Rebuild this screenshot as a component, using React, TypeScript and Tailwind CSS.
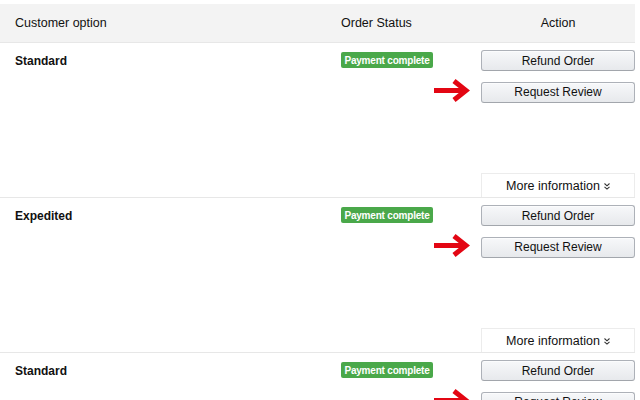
const rows = ['Standard', 'Expedited', 'Standard'];

function RedArrow() {
  return (
    <svg width="36" height="23" viewBox="0 0 36 23" className="block">
      <path d="M0 11.5 H31" stroke="#e30613" strokeWidth="5" fill="none" />
      <path
        d="M20 2 L32 11.5 L20 21"
        stroke="#e30613"
        strokeWidth="5"
        fill="none"
        strokeLinejoin="miter"
      />
    </svg>
  );
}

function ActionButton({ label }: { label: string }) {
  return (
    <button className="h-[21px] w-full rounded-[3px] border border-[#adb1b8] border-b-[#a2a6ac] bg-gradient-to-b from-[#f7f8fa] to-[#e7e9ec] text-[12px] leading-none text-[#111] shadow-[inset_0_1px_0_rgba(255,255,255,0.6)]">
      {label}
    </button>
  );
}

function OrderRow({ option }: { option: string }) {
  return (
    <div className="grid h-[155px] grid-cols-[341px_140px_154px] border-b border-[#e7e7e7]">
      <div className="pl-[15px] pt-[9px] text-[12px] font-bold text-[#111]">
        {option}
      </div>
      <div className="flex flex-col pt-[9px]">
        <span className="flex h-[16px] w-[92px] items-center justify-center whitespace-nowrap rounded-[2px] bg-[#4aa84a] text-[10px] font-bold tracking-[-0.2px] text-white">
          Payment complete
        </span>
        <div className="mt-[11px] flex pl-[93px]">
          <RedArrow />
        </div>
      </div>
      <div className="flex flex-col pt-[7px]">
        <ActionButton label="Refund Order" />
        <div className="mt-[8px]">
          <ActionButton label="Request Review" />
        </div>
        <div className="mt-auto flex h-[24px] items-center justify-center gap-[4px] border border-b-0 border-[#ececec] bg-white pt-[1px] text-[12.5px] text-[#111]">
          <span>More information</span>
          <svg width="6" height="7" viewBox="0 0 6 7">
            <path d="M0.5 0.5 L3 2.8 L5.5 0.5 M0.5 3.8 L3 6.1 L5.5 3.8" stroke="#333" strokeWidth="1.1" fill="none" />
          </svg>
        </div>
      </div>
    </div>
  );
}

export default function App() {
  return (
    <div className="h-[400px] w-[640px] overflow-hidden bg-white pt-[4px] font-['Liberation_Sans',Arial,sans-serif]">
      <div className="w-[635px]">
        <div className="grid h-[39px] grid-cols-[341px_140px_154px] items-center border-b border-[#e7e7e7] bg-[#f3f3f3] text-[12.5px] text-[#111]">
          <div className="pl-[15px]">Customer option</div>
          <div>Order Status</div>
          <div className="text-center">Action</div>
        </div>
        {rows.map((option, i) => (
          <OrderRow key={'row_' + i} option={option} />
        ))}
      </div>
    </div>
  );
}
